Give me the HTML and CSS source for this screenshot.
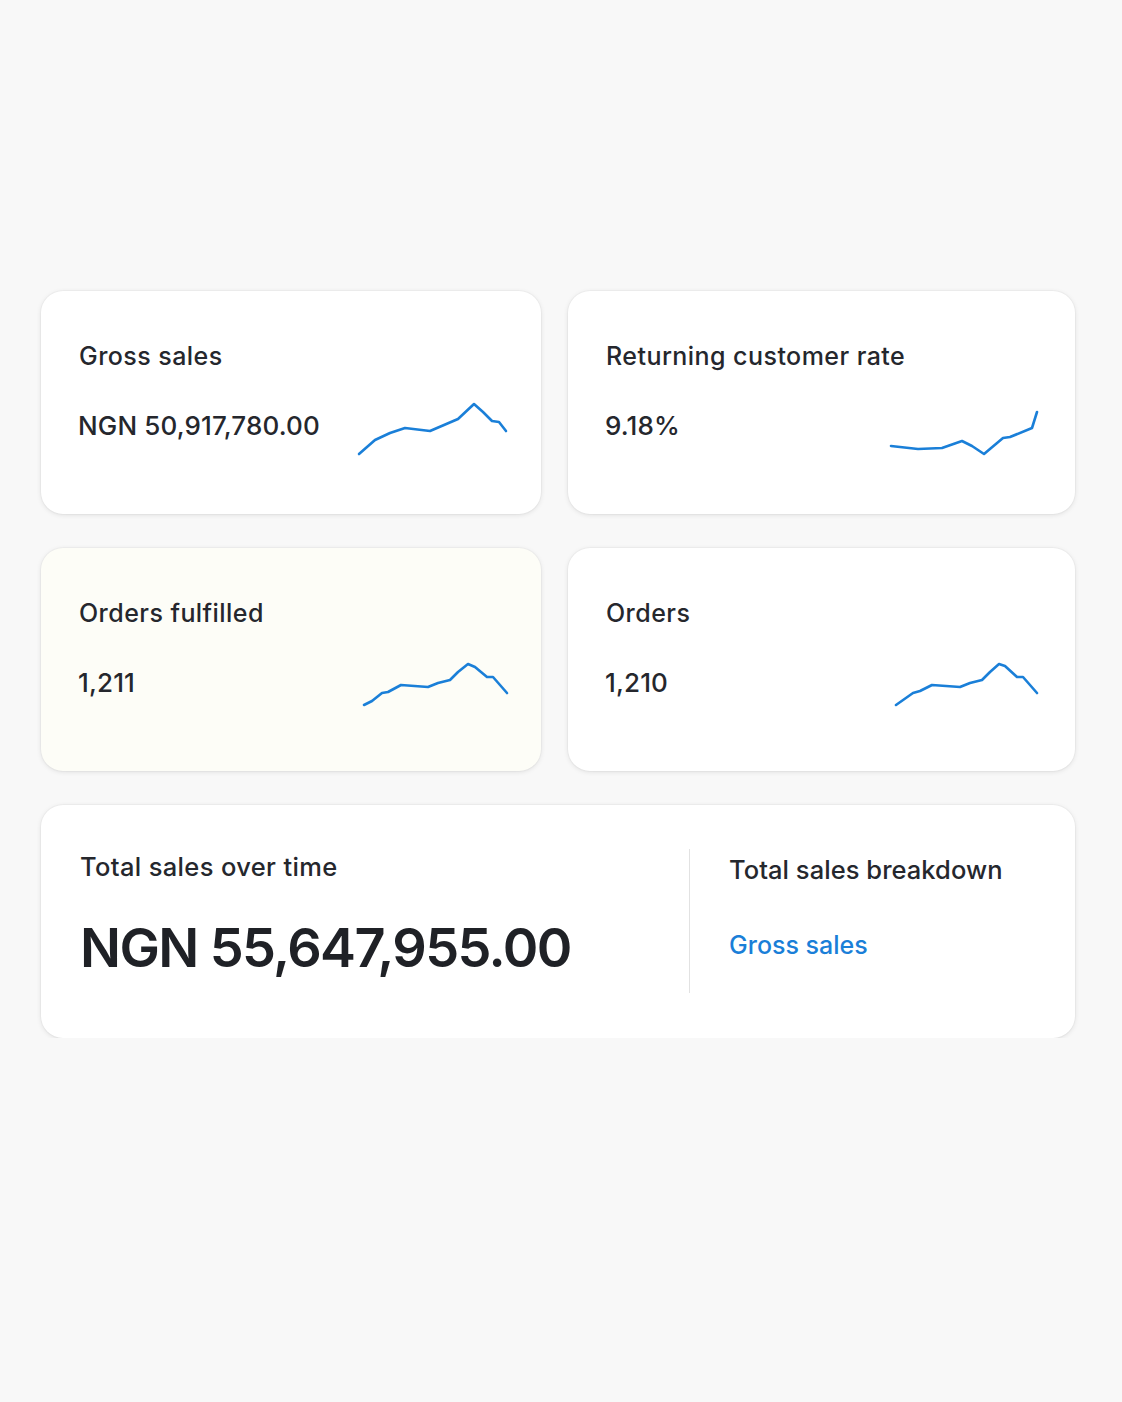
FILE: index.html
```html
<!DOCTYPE html>
<html lang="en">
<head>
<meta charset="utf-8">
<title>Sales overview</title>
<link rel="stylesheet" href="styles.css">
</head>
<body>
<main class="dashboard">
  <section class="grid">
    <article class="card">
      <h2 class="card-title">Gross sales</h2>
      <div class="card-row">
        <span class="card-value">NGN 50,917,780.00</span>
        <svg class="spark" viewBox="355 396 152 64" width="152" height="64">
          <polyline points="359,454 375,440 390,433 405,428 430,431 458,419 474,404 483,412 492,421 499,422 506,431"/>
        </svg>
      </div>
    </article>
    <article class="card">
      <h2 class="card-title">Returning customer rate</h2>
      <div class="card-row">
        <span class="card-value">9.18%</span>
        <svg class="spark" viewBox="889 396 152 64" width="152" height="64">
          <polyline points="891,446 918,449 942,448 962,441 972,446 984,454 1003,438 1010,437 1032,428 1037,412"/>
        </svg>
      </div>
    </article>
    <article class="card card-cream">
      <h2 class="card-title">Orders fulfilled</h2>
      <div class="card-row">
        <span class="card-value">1,211</span>
        <svg class="spark" viewBox="355 653 152 64" width="152" height="64">
          <polyline points="364,705 372,701 382,693 388,692 401,685 428,687 438,683 450,680 458,672 468,664 475,667 487,677 493,677 507,693"/>
        </svg>
      </div>
    </article>
    <article class="card">
      <h2 class="card-title">Orders</h2>
      <div class="card-row">
        <span class="card-value">1,210</span>
        <svg class="spark" viewBox="889 653 152 64" width="152" height="64">
          <polyline points="896,705 913,693 920,691 932,685 960,687 970,683 982,680 990,672 999,664 1005,666 1017,677 1023,677 1037,693"/>
        </svg>
      </div>
    </article>
  </section>
  <section class="card total-card">
    <div class="total-main">
      <h2 class="total-title">Total sales over time</h2>
      <p class="total-value">NGN 55,647,955.00</p>
    </div>
    <div class="total-side">
      <h2 class="total-title side-title">Total sales breakdown</h2>
      <a class="breakdown-link" href="#">Gross sales</a>
    </div>
  </section>
</main>
</body>
</html>
```

FILE: styles.css
```css
* { box-sizing: border-box; }

html, body {
  margin: 0;
  padding: 0;
  background: #f8f8f8;
  font-family: Inter, "Noto Sans", "Liberation Sans", sans-serif;
  color: #25272d;
}

.dashboard {
  padding: 291px 47px 0 41px;
  display: flex;
  flex-direction: column;
  gap: 34px;
}

.grid {
  display: grid;
  grid-template-columns: 500px 507px;
  column-gap: 27px;
  row-gap: 34px;
}

.card {
  background: #ffffff;
  border-radius: 22px;
  box-shadow: 0 1px 5px rgba(0, 0, 0, 0.1), 0 0 0 1px rgba(0, 0, 0, 0.025);
}

.grid .card {
  height: 223px;
  padding: 50px 34px 0 38px;
  display: flex;
  flex-direction: column;
}

.card-cream {
  background: #fdfdf7;
}

.card-title {
  margin: 0;
  font-size: 25px;
  line-height: 30px;
  font-weight: 500;
  letter-spacing: 0.45px;
}

.card-row {
  margin-top: 25px;
  height: 64px;
  display: flex;
  align-items: center;
  justify-content: space-between;
}

.card-value {
  font-size: 26px;
  font-weight: 500;
  letter-spacing: 0.15px;
  margin-top: -6px;
  margin-left: -1px;
}

.spark {
  flex: none;
  overflow: visible;
}

.spark polyline {
  fill: none;
  stroke: #1a7fd8;
  stroke-width: 2.6;
  stroke-linejoin: round;
  stroke-linecap: round;
}

.total-card {
  height: 233px;
  display: flex;
  align-items: center;
  padding: 0 40px 0 39px;
}

.total-main {
  width: 610px;
  align-self: stretch;
  border-right: 1.5px solid #e2e2e2;
  margin: 44px 0 45px 0;
  padding-top: 2px;
}

.total-title {
  margin: 0;
  font-size: 25.5px;
  line-height: 32px;
  font-weight: 500;
  letter-spacing: 0.35px;
}

.side-title {
  letter-spacing: 0.05px;
}

.total-value {
  margin: 33px 0 0;
  font-size: 54px;
  line-height: 64px;
  font-weight: 600;
  letter-spacing: -1.6px;
  color: #1f2126;
}

.total-side {
  align-self: stretch;
  padding: 49px 0 0 39px;
  display: flex;
  flex-direction: column;
}

.breakdown-link {
  margin-top: 43px;
  font-size: 25px;
  line-height: 32px;
  font-weight: 500;
  color: #1a7fd8;
  text-decoration: none;
}
```
